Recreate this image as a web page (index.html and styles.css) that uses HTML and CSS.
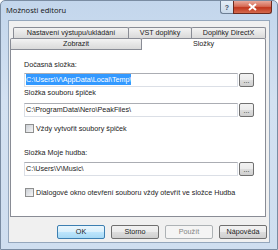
FILE: index.html
```html
<!DOCTYPE html>
<html lang="cs">
<head>
    <meta charset="UTF-8">
    <title>Možnosti editoru</title>
    <link rel="stylesheet" href="styles.css">
</head>
<body>
    <div class="window">
        <div class="titlebar">
            <span class="title">Možnosti editoru</span>
            <div class="caption-btns">
                <span class="cap cap-help">?</span>
                <span class="cap cap-close">
                    <svg width="9" height="8" viewBox="0 0 9 8"><path d="M1 1 L8 7 M8 1 L1 7" stroke="#fff" stroke-width="2" fill="none"/></svg>
                </span>
            </div>
        </div>

        <div class="client">
            <!-- dvě řady záložek -->
            <div class="tab-row tab-row-back">
                <div class="tab tab-output">Nastavení výstupu/ukládání</div>
                <div class="tab tab-vst">VST doplňky</div>
                <div class="tab tab-dx">Doplňky DirectX</div>
            </div>
            <div class="tab-row">
                <div class="tab tab-view">Zobrazit</div>
                <div class="tab tab-folders active">Složky</div>
            </div>

            <div class="panel">
                <div class="label label-first">Dočasná složka:</div>
                <div class="field">
                    <div class="input"><span class="selected">C:\Users\V\AppData\Local\Temp\</span></div>
                    <div class="browse">...</div>
                </div>

                <div class="label label-second">Složka souboru špiček</div>
                <div class="field field-second">
                    <div class="input">C:\ProgramData\Nero\PeakFiles\</div>
                    <div class="browse">...</div>
                </div>

                <div class="check-row check-first">
                    <span class="check"></span>
                    <span>Vždy vytvořit soubory špiček</span>
                </div>

                <div class="label label-third">Složka Moje hudba:</div>
                <div class="field field-third">
                    <div class="input">C:\Users\V\Music\</div>
                    <div class="browse">...</div>
                </div>

                <div class="check-row check-second">
                    <span class="check"></span>
                    <span>Dialogové okno otevření souboru vždy otevřít ve složce Hudba</span>
                </div>
            </div>

            <div class="buttons">
                <div class="btn btn-default">OK</div>
                <div class="btn">Storno</div>
                <div class="btn btn-disabled">Použít</div>
                <div class="btn">Nápověda</div>
            </div>
        </div>
    </div>
</body>
</html>
```

FILE: styles.css
```css
:root {
    --tab-border: #898c95;
    --ui-font: "Liberation Sans", Arial, sans-serif;
}

body {
    margin: 0;
    font-family: var(--ui-font);
    font-size: 7.2px;
    color: #1b1b1b;
}

.window {
    width: 278px;
    height: 250px;
    box-sizing: border-box;
    border: 1px solid #7a8ca2;
    border-radius: 5px 5px 0 0;
    background: linear-gradient(#c3d6ec, #d3e1f1 40%, #cfdeef);
    display: flex;
    flex-direction: column;
}

/* titulek okna */
.titlebar {
    height: 19px;
    display: flex;
    justify-content: space-between;
}

.title {
    font-family: "Open Sans", var(--ui-font);
    font-size: 7.6px;
    line-height: 19px;
    padding-left: 5px;
    color: #111;
}

.caption-btns {
    display: flex;
    margin-right: 5px;
}

.cap {
    height: 13px;
    box-sizing: border-box;
    border: 1px solid #6c7e94;
    border-top: none;
    display: flex;
    align-items: center;
    justify-content: center;
}

.cap-help {
    width: 13px;
    border-radius: 0 0 0 3px;
    border-right: none;
    background: linear-gradient(#e4edf7, #c9d9ea);
    color: #3d4f66;
    font-size: 7px;
    font-weight: bold;
}

.cap-close {
    width: 39px;
    border-radius: 0 0 3px 0;
    border-color: #6b2a1f;
    background: linear-gradient(#e9a99b, #d66b55 45%, #c1371e 55%, #d46a4e);
}

/* klientská oblast */
.client {
    flex: 1;
    margin: 0 7px 6px 7px;
    border: 1px solid #95a7bc;
    background: #f0f0f0;
    padding: 6px 3px 0 1px;
    display: flex;
    flex-direction: column;
}

.tab-row {
    display: flex;
    height: 11px;
}

.tab-row-back {
    margin-left: 3px;
}

.tab {
    box-sizing: border-box;
    height: 11px;
    border: 1px solid var(--tab-border);
    border-bottom: none;
    border-radius: 2px 2px 0 0;
    background: linear-gradient(#f3f3f3, #e6e6e6 50%, #dadada);
    text-align: center;
    line-height: 10px;
}

.tab + .tab {
    margin-left: -1px;
}

.tab-output { width: 116px; }
.tab-vst { width: 64px; }
.tab-dx { width: 75px; }
.tab-view { width: 132px; }
.tab-folders { width: 125px; }

.tab.active {
    height: 12px;
    margin-bottom: -1px;
    background: #fff;
    position: relative;
}

.panel {
    height: 168px;
    box-sizing: border-box;
    border: 1px solid var(--tab-border);
    background: #fff;
    padding: 0 11px 0 13px;
}

.label {
    line-height: 10px;
}

.label-first { margin-top: 10px; }
.label-second { margin-top: 1px; }
.label-third { margin-top: 15px; }

.field {
    display: flex;
    gap: 1px;
    height: 14px;
    margin-top: 3px;
}

.field-second { margin-top: 5px; }
.field-third { margin-top: 4px; }

.input {
    flex: 1;
    box-sizing: border-box;
    border: 1px solid #dbdfe6;
    border-top-color: #abadb3;
    padding: 0 1px;
    line-height: 12px;
    white-space: nowrap;
    overflow: hidden;
}

.selected {
    background: #3399ff;
    color: #fff;
    padding: 1px 0;
}

.browse {
    width: 15px;
    box-sizing: border-box;
    border: 1px solid #707070;
    border-radius: 2px;
    background: linear-gradient(#f2f2f2, #ebebeb 50%, #dddddd 50%, #cfcfcf);
    text-align: center;
    line-height: 14px;
    font-size: 7px;
}

.check-row {
    display: flex;
    align-items: center;
    gap: 2px;
    height: 10px;
    margin-left: 1px;
}

.check-first { margin-top: 6px; }
.check-second { margin-top: 11px; }

.check {
    width: 9px;
    height: 9px;
    box-sizing: border-box;
    border: 1px solid #8e8f8f;
    background: linear-gradient(135deg, #cbcfd5, #f6f6f6);
}

/* tlačítka dialogu */
.buttons {
    display: flex;
    justify-content: flex-end;
    gap: 6px;
    margin-top: 8px;
    margin-right: -1px;
}

.btn {
    width: 48px;
    height: 14px;
    box-sizing: border-box;
    border: 1px solid #707070;
    border-radius: 2px;
    background: linear-gradient(#f2f2f2, #ebebeb 50%, #dddddd 50%, #cfcfcf);
    text-align: center;
    line-height: 12px;
}

.btn-default {
    border-color: #3c7fb1;
    background: linear-gradient(#eaf6fd, #d9f0fc 50%, #bee6fd 50%, #a7d9f5);
}

.btn-disabled {
    border-color: #adb2b5;
    background: #f4f4f4;
    color: #838383;
}
```
